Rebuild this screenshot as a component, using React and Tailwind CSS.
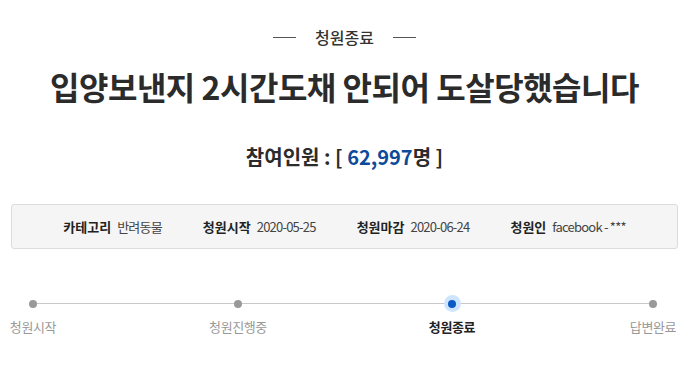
const FONT = 'font-["Noto_Sans_CJK_KR","Noto_Sans",sans-serif]';

const INFO = [
  { label: '카테고리', value: '반려동물' },
  { label: '청원시작', value: '2020-05-25' },
  { label: '청원마감', value: '2020-06-24' },
  { label: '청원인', value: 'facebook - ***' },
];

// dot centers measured off the design: 33 / 238 / 452 / 653
const STEPS = [
  { label: '청원시작', ml: 'ml-[3px]' },
  { label: '청원진행중', ml: 'ml-[145px]' },
  { label: '청원종료', ml: 'ml-[154px]', active: true },
  { label: '답변완료', ml: 'ml-[141px]' },
];

export default function App() {
  return (
    <div className={`${FONT} w-[689px] h-[374px] bg-white text-[#333] overflow-hidden`}>
      <div className="pt-[25px] flex items-center justify-center gap-[19px]">
        <span className="w-[23px] h-px bg-[#555]" />
        <span className="text-[16px] leading-[24px] font-medium">청원종료</span>
        <span className="w-[23px] h-px bg-[#555]" />
      </div>

      <h1 className="mt-[17px] text-center text-[32px] leading-[40px] font-bold tracking-[-0.015em] text-[#2b2b2b]">
        입양보낸지 2시간도채 안되어 도살당했습니다
      </h1>

      <div className="mt-[37px] text-center text-[20px] leading-[28px] font-bold text-[#2b2b2b]">
        참여인원 : [ <span className="text-[#0c4a9a]">62,997</span>명 ]
      </div>

      <div className="mt-[33px] mx-[11px] h-[45px] rounded-[3px] border border-[#dcdcdc] bg-[#f5f5f5] flex items-center justify-center gap-[41px] text-[13px]">
        {INFO.map(item => (
          <div key={item.label} className="flex items-center gap-[6px]">
            <span className="font-bold text-[#222]">{item.label}</span>
            <span className="text-[#444] tracking-[-0.06em]">{item.value}</span>
          </div>
        ))}
      </div>

      <div className="relative mt-[45px]">
        <div className="absolute left-[33px] w-[620px] top-[9px] h-px bg-[#c8c8c8]" />
        <div className="relative flex">
          {STEPS.map(step => (
            <div key={step.label} className={`${step.ml} w-[60px] flex flex-col items-center`}>
              <div className="h-[19px] flex items-center justify-center">
                {step.active ? (
                  <span className="w-[17px] h-[17px] rounded-full bg-[#cfe5ff] flex items-center justify-center">
                    <span className="w-[8px] h-[8px] rounded-full bg-[#0b5bc4]" />
                  </span>
                ) : (
                  <span className="w-[8px] h-[8px] rounded-full bg-[#999]" />
                )}
              </div>
              <span
                className={`mt-[5px] whitespace-nowrap text-[13px] leading-[18px] tracking-[-0.03em] ${
                  step.active ? 'font-bold text-[#222]' : 'text-[#999]'
                }`}
              >
                {step.label}
              </span>
            </div>
          ))}
        </div>
      </div>
    </div>
  );
}
